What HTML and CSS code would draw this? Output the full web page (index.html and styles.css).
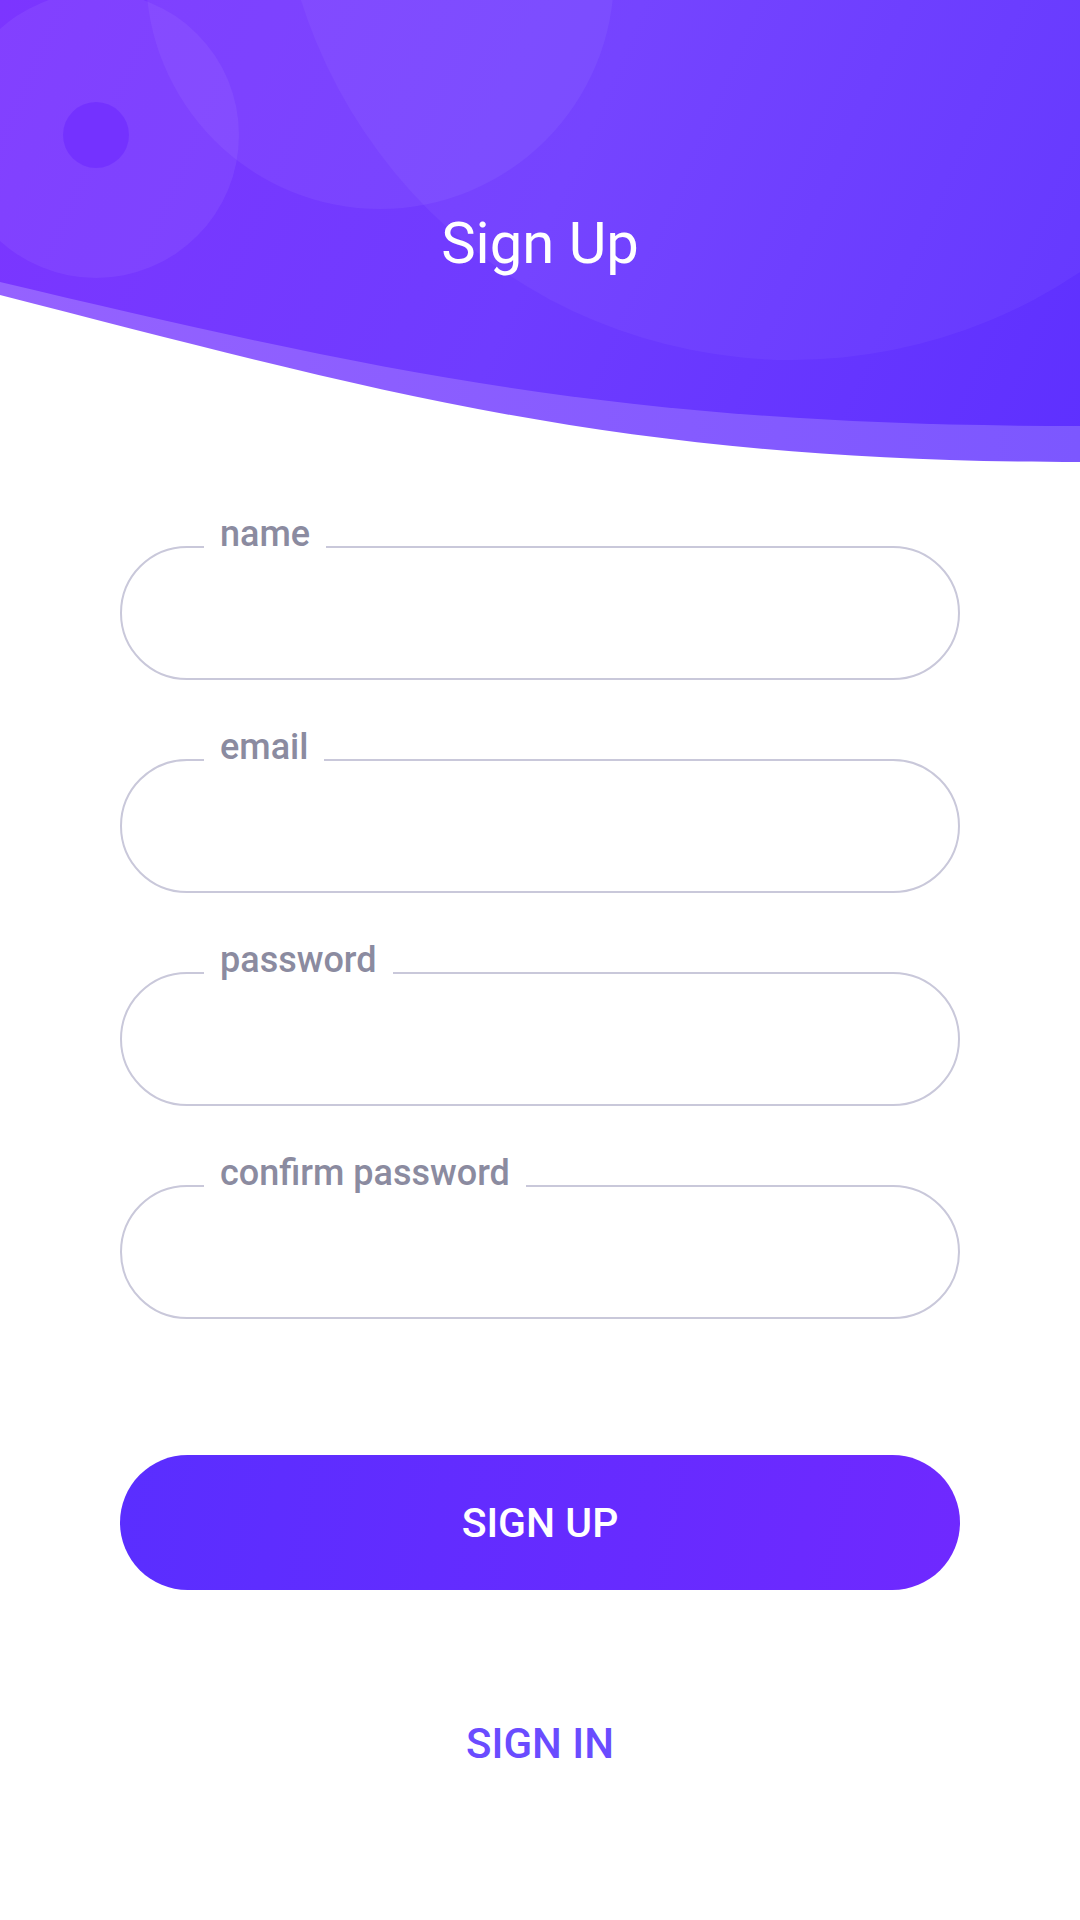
FILE: index.html
```html
<!DOCTYPE html>
<html lang="en">
<head>
<meta charset="utf-8">
<title>Sign Up</title>
<link rel="stylesheet" href="styles.css">
</head>
<body>
<div class="screen">
  <header class="hero">
    <svg class="hero-bg" width="1080" height="470" viewBox="0 0 1080 470" aria-hidden="true">
      <defs>
        <linearGradient id="bgGrad" gradientUnits="userSpaceOnUse" x1="0" y1="0" x2="1080" y2="470">
          <stop offset="0" stop-color="#7c35ff"/>
          <stop offset="0.5" stop-color="#6f3cff"/>
          <stop offset="1" stop-color="#5e30ff"/>
        </linearGradient>
        <linearGradient id="bandGrad" gradientUnits="userSpaceOnUse" x1="0" y1="0" x2="1080" y2="0">
          <stop offset="0" stop-color="#9562ff"/>
          <stop offset="1" stop-color="#7c57ff"/>
        </linearGradient>
        <clipPath id="darkClip">
          <path d="M0,0 H1080 V426 C620,426 380,372 0,282 Z"/>
        </clipPath>
      </defs>
      <path d="M0,0 H1080 V462 C620,462 380,392 0,295 Z" fill="url(#bandGrad)"/>
      <path d="M0,0 H1080 V426 C620,426 380,372 0,282 Z" fill="url(#bgGrad)"/>
      <g clip-path="url(#darkClip)">
        <circle cx="96" cy="135" r="143" fill="#ffffff" fill-opacity="0.06"/>
        <circle cx="380" cy="-25" r="234" fill="#ffffff" fill-opacity="0.05"/>
        <circle cx="792" cy="-155" r="515" fill="#ffffff" fill-opacity="0.045"/>
        <circle cx="96" cy="135" r="33" fill="#6f2cff" fill-opacity="0.7"/>
      </g>
    </svg>
    <h1 class="title">Sign Up</h1>
  </header>

  <form class="form">
    <div class="field"><span class="field-label">name</span></div>
    <div class="field"><span class="field-label">email</span></div>
    <div class="field"><span class="field-label">password</span></div>
    <div class="field"><span class="field-label">confirm password</span></div>

    <button type="button" class="btn-primary">SIGN UP</button>
    <button type="button" class="btn-link">SIGN IN</button>
  </form>
</div>
</body>
</html>
```

FILE: styles.css
```css
* {
  box-sizing: border-box;
}

html, body {
  margin: 0;
  padding: 0;
  background: #ffffff;
}

body {
  font-family: Roboto, "Noto Sans", "Liberation Sans", sans-serif;
}

.screen {
  width: 1080px;
  height: 1920px;
  overflow: hidden;
  background: #ffffff;
}

.hero {
  position: relative;
  height: 470px;
  padding-top: 214px;
}

.hero-bg {
  position: absolute;
  left: 0;
  top: 0;
  display: block;
}

.title {
  position: relative;
  margin: 0;
  text-align: center;
  color: #ffffff;
  font-weight: 400;
  font-size: 58px;
  line-height: 58px;
}

.form {
  display: flex;
  flex-direction: column;
  padding: 76px 120px 0;
}

.field {
  position: relative;
  height: 134px;
  border: 2px solid #c9c8da;
  border-radius: 67px;
  margin-bottom: 79px;
}

.field:nth-of-type(4) {
  margin-bottom: 136px;
}

.field-label {
  position: absolute;
  top: -32px;
  left: 82px;
  padding: 0 16px;
  background: #ffffff;
  color: #8b8ba0;
  font-size: 36px;
  line-height: 36px;
  font-weight: 500;
  white-space: nowrap;
}

.btn-primary {
  height: 135px;
  border: none;
  border-radius: 68px;
  background: linear-gradient(100deg, #5a2eff 0%, #6f29ff 100%);
  color: #ffffff;
  font-family: inherit;
  font-size: 41px;
  font-weight: 500;
  letter-spacing: 0;
  padding: 0;
}

.btn-link {
  margin-top: 133px;
  align-self: center;
  border: none;
  background: none;
  padding: 0;
  color: #6a4cff;
  font-family: inherit;
  font-size: 42px;
  line-height: 42px;
  font-weight: 500;
}
```
